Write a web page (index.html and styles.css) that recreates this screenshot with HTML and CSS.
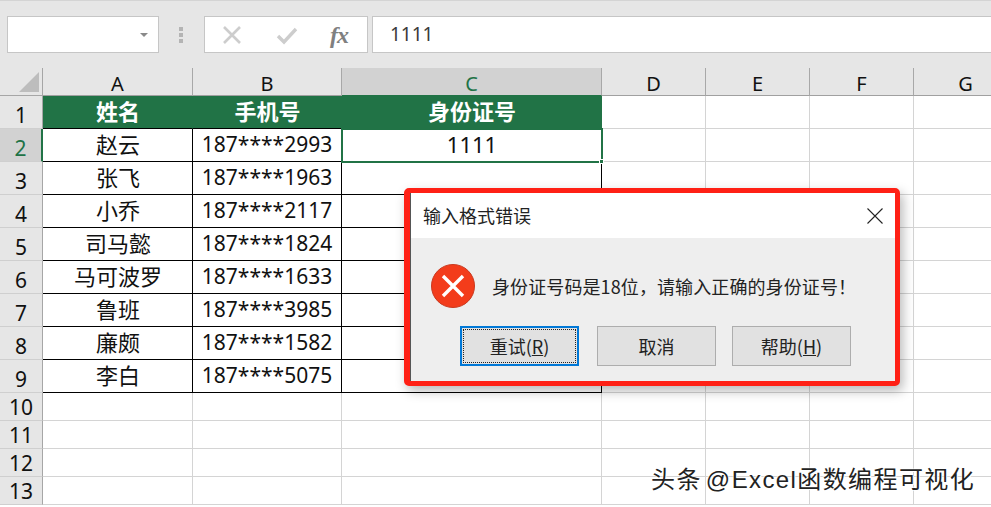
FILE: index.html
```html
<!DOCTYPE html>
<html lang="zh-CN">
<head>
<meta charset="utf-8">
<title>输入格式错误</title>
<link rel="stylesheet" href="styles.css">
</head>
<body>
<div class="app">
  <div class="formula-bar">
    <div class="name-box"><span class="caret"></span></div>
    <div class="grip"><i></i><i></i><i></i></div>
    <div class="fx-box">
      <svg class="tool" width="22" height="22" viewBox="0 0 22 22"><path d="M3 3L19 19M19 3L3 19" fill="none" stroke="#cdcdcd" stroke-width="2.6"/></svg>
      <svg class="tool" width="22" height="22" viewBox="0 0 22 22"><path d="M2 12L8 18L20 5" fill="none" stroke="#cdcdcd" stroke-width="3.4"/></svg>
      <span class="fx">fx</span>
    </div>
    <div class="formula-input">1111</div>
  </div>
  <div class="sheet">
    <div class="corner"><span class="tri"></span></div>
    <div class="ch">A</div><div class="ch">B</div><div class="ch ch-sel">C</div><div class="ch">D</div><div class="ch">E</div><div class="ch">F</div><div class="ch">G</div>

    <div class="rh">1</div><div class="c th">姓名</div><div class="c th">手机号</div><div class="c th">身份证号</div><div class="g"></div><div class="g"></div><div class="g"></div><div class="g"></div>

    <div class="rh rh-sel">2</div><div class="c">赵云</div><div class="c num">187****2993</div><div class="c sel">1111<span class="handle"></span></div><div class="g"></div><div class="g"></div><div class="g"></div><div class="g"></div>

    <div class="rh">3</div><div class="c">张飞</div><div class="c num">187****1963</div><div class="c"></div><div class="g"></div><div class="g"></div><div class="g"></div><div class="g"></div>

    <div class="rh">4</div><div class="c">小乔</div><div class="c num">187****2117</div><div class="c"></div><div class="g"></div><div class="g"></div><div class="g"></div><div class="g"></div>

    <div class="rh">5</div><div class="c">司马懿</div><div class="c num">187****1824</div><div class="c"></div><div class="g"></div><div class="g"></div><div class="g"></div><div class="g"></div>

    <div class="rh">6</div><div class="c">马可波罗</div><div class="c num">187****1633</div><div class="c"></div><div class="g"></div><div class="g"></div><div class="g"></div><div class="g"></div>

    <div class="rh">7</div><div class="c">鲁班</div><div class="c num">187****3985</div><div class="c"></div><div class="g"></div><div class="g"></div><div class="g"></div><div class="g"></div>

    <div class="rh">8</div><div class="c">廉颇</div><div class="c num">187****1582</div><div class="c"></div><div class="g"></div><div class="g"></div><div class="g"></div><div class="g"></div>

    <div class="rh">9</div><div class="c">李白</div><div class="c num">187****5075</div><div class="c"></div><div class="g"></div><div class="g"></div><div class="g"></div><div class="g"></div>

    <div class="rh">10</div><div class="g"></div><div class="g"></div><div class="g"></div><div class="g"></div><div class="g"></div><div class="g"></div><div class="g"></div>
    <div class="rh">11</div><div class="g"></div><div class="g"></div><div class="g"></div><div class="g"></div><div class="g"></div><div class="g"></div><div class="g"></div>
    <div class="rh">12</div><div class="g"></div><div class="g"></div><div class="g"></div><div class="g"></div><div class="g"></div><div class="g"></div><div class="g"></div>
    <div class="rh">13</div><div class="g"></div><div class="g"></div><div class="g"></div><div class="g"></div><div class="g"></div><div class="g"></div><div class="g"></div>
  </div>

  <div class="dialog">
    <div class="dialog-title">
      <span class="title-text">输入格式错误</span>
      <svg class="close" width="16" height="16" viewBox="0 0 16 16"><path d="M0.5 0.5L15.5 15.5M15.5 0.5L0.5 15.5" fill="none" stroke="#222" stroke-width="1.1"/></svg>
    </div>
    <div class="dialog-body">
      <div class="message">
        <svg class="err" width="44" height="44" viewBox="0 0 44 44"><circle cx="22" cy="22" r="21.5" fill="#f33c1b" stroke="#c9391f"/><path d="M12 12L32 32M32 12L12 32" fill="none" stroke="#fff" stroke-width="3.4"/></svg>
        <span class="msg-text">身份证号码是18位，请输入正确的身份证号！</span>
      </div>
      <div class="buttons">
        <div class="btn btn-default"><span class="btn-focus">重试(<u>R</u>)</span></div>
        <div class="btn">取消</div>
        <div class="btn">帮助(<u>H</u>)</div>
      </div>
    </div>
  </div>

  <div class="watermark">头条 @Excel函数编程可视化</div>
</div>
</body>
</html>
```
FILE: styles.css
```css
* { box-sizing: border-box; }
html, body { margin: 0; padding: 0; }
body {
  width: 991px;
  height: 507px;
  overflow: hidden;
  background: #fff;
  font-family: "Noto Sans CJK SC", "Noto Sans", sans-serif;
}
.app { position: relative; width: 991px; height: 507px; overflow: hidden; }

/* formula bar */
.formula-bar {
  height: 68px;
  background: #e6e6e6;
  border-top: 1px solid #d4d4d4;
  display: flex;
  align-items: flex-start;
  padding: 15px 0 0 7px;
}
.name-box {
  width: 152px;
  height: 37px;
  background: #fff;
  border: 1px solid #c6c6c6;
  display: flex;
  align-items: center;
  justify-content: flex-end;
  padding-right: 10px;
}
.caret {
  width: 0;
  height: 0;
  border-left: 4px solid transparent;
  border-right: 4px solid transparent;
  border-top: 4px solid #8a8a8a;
}
.grip {
  width: 43px;
  height: 37px;
  margin-right: 2px;
  display: flex;
  flex-direction: column;
  align-items: center;
  justify-content: center;
  gap: 2px;
}
.grip i { width: 4px; height: 4px; background: #b4b4b4; display: block; }
.fx-box {
  width: 164px;
  height: 37px;
  background: #fff;
  border: 1px solid #c6c6c6;
  display: flex;
  align-items: center;
  padding-left: 16px;
  gap: 33px;
}
.fx {
  font-family: "Liberation Serif", serif;
  font-style: italic;
  font-weight: bold;
  font-size: 24px;
  line-height: 24px;
  letter-spacing: -1px;
  color: #808080;
  margin-left: -1px;
}
.formula-input {
  flex: 1;
  margin-left: 4px;
  height: 37px;
  background: #fff;
  border: 1px solid #c6c6c6;
  border-right: 0;
  padding-left: 17px;
  font-family: "Noto Sans", sans-serif;
  font-size: 19px;
  line-height: 35px;
  color: #3a3a3a;
}

/* sheet */
.sheet {
  display: grid;
  grid-template-columns: 43px 150px 149px 260px 104px 104px 104px 104px;
  grid-template-rows: 28px repeat(9, 33px) repeat(4, 28px);
  font-family: "Noto Sans", "Noto Sans CJK SC", sans-serif;
  color: #111;
}
.corner {
  background: #e6e6e6;
  border-right: 1px solid #a6a6a6;
  border-bottom: 1px solid #a6a6a6;
  display: flex;
  align-items: flex-end;
  justify-content: flex-end;
  padding: 0 3px 3px 0;
}
.tri {
  width: 0;
  height: 0;
  border-left: 20px solid transparent;
  border-bottom: 20px solid #bdbdbd;
}
.ch {
  background: #e6e6e6;
  border-right: 1px solid #a8a8a8;
  border-bottom: 1px solid #a0a0a0;
  font-size: 20px;
  line-height: 27px;
  text-align: center;
  padding-top: 2px;
}
.ch-sel { background: #d2d2d2; color: #217346; border-bottom-color: #217346; }
.rh {
  background: #e6e6e6;
  border-right: 1px solid #a6a6a6;
  border-bottom: 1px solid #cfcfcf;
  font-size: 21px;
  display: flex;
  align-items: flex-end;
  justify-content: center;
  line-height: 25px;
}
.rh-sel { background: #d2d2d2; color: #217346; border-right: 2px solid #217346; }
.g { border-right: 1px solid #d4d4d4; border-bottom: 1px solid #d4d4d4; }
.c {
  position: relative;
  border-right: 1px solid #000;
  border-bottom: 1px solid #000;
  font-size: 22px;
  line-height: 30px;
  padding-left: 1px;
  text-align: center;
  white-space: nowrap;
}
.num { font-size: 21px; padding-left: 0; }
.th {
  background: #217346;
  color: #fff;
  font-weight: bold;
  border-right-color: #217346;
}
.sel { outline: 2px solid #217346; outline-offset: -1px; z-index: 1; }
.handle {
  position: absolute;
  right: -3px;
  bottom: -3px;
  width: 5px;
  height: 5px;
  background: #217346;
  border: 1px solid #fff;
}

/* dialog */
.dialog {
  position: absolute;
  left: 404px;
  top: 188px;
  width: 496px;
  height: 198px;
  border: 5px solid #ff2015;
  border-left-width: 6px;
  border-radius: 5px;
  background: #eee;
  box-shadow: 3px 5px 12px rgba(0, 0, 0, 0.28);
  display: flex;
  flex-direction: column;
  color: #222;
}
.dialog-title {
  height: 45px;
  background: #fff;
  border-left: 1px solid #555;
  display: flex;
  align-items: center;
  justify-content: space-between;
  padding: 0 12px;
  font-size: 18px;
}
.title-text { margin-top: -2px; }
.close { flex: none; }
.dialog-body {
  flex: 1;
  border-left: 1px solid #555;
  display: flex;
  flex-direction: column;
}
.message {
  height: 88px;
  display: flex;
  align-items: center;
  padding: 7px 0 0 20px;
  gap: 17px;
}
.err { flex: none; }
.msg-text { font-size: 18px; white-space: nowrap; letter-spacing: 0.1px; }
.buttons {
  display: flex;
  padding-left: 49px;
  gap: 16px;
}
.btn {
  width: 119px;
  height: 40px;
  background: #e1e1e1;
  border: 1px solid #adadad;
  font-size: 18px;
  display: flex;
  align-items: center;
  justify-content: center;
  white-space: nowrap;
}
.btn-default { border: 2px solid #0078d7; padding: 1px; margin-right: 2px; }
.btn-focus {
  width: 100%;
  height: 100%;
  border: 1px dotted #222;
  display: flex;
  align-items: center;
  justify-content: center;
}

/* watermark */
.watermark {
  position: absolute;
  left: 651px;
  top: 464px;
  font-family: "Liberation Sans", "Noto Sans CJK SC", sans-serif;
  font-size: 24px;
  line-height: 32px;
  letter-spacing: 1.4px;
  word-spacing: -4px;
  color: #222;
  white-space: nowrap;
  text-shadow: 1px 1px 0 #fff, -1px -1px 0 rgba(255, 255, 255, 0.6);
}
```
